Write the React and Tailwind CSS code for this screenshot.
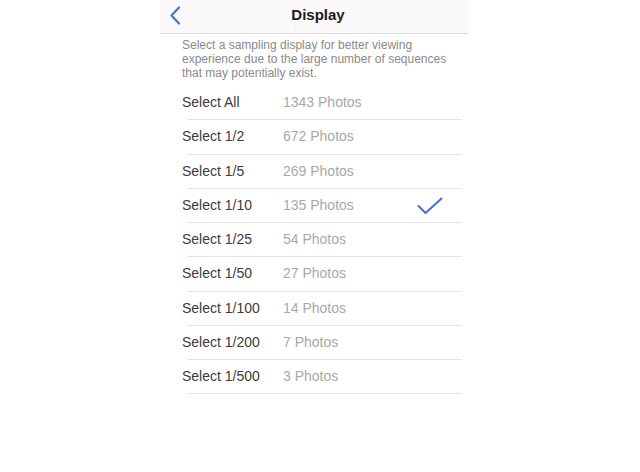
import React from "react";

const rows = [
  { label: "Select All", count: "1343 Photos" },
  { label: "Select 1/2", count: "672 Photos" },
  { label: "Select 1/5", count: "269 Photos" },
  { label: "Select 1/10", count: "135 Photos", checked: true },
  { label: "Select 1/25", count: "54 Photos" },
  { label: "Select 1/50", count: "27 Photos" },
  { label: "Select 1/100", count: "14 Photos" },
  { label: "Select 1/200", count: "7 Photos" },
  { label: "Select 1/500", count: "3 Photos" },
];

export default function App() {
  return (
    <div
      className="w-[640px] h-[472px] bg-white overflow-hidden"
      style={{ fontFamily: '"Liberation Sans", Arial, sans-serif' }}
    >
      <div className="ml-[160px] w-[308px]">
        {/* nav bar */}
        <div className="relative h-[34px] bg-[#fbf9fb] border-b border-[#dcdadc] flex items-center justify-center">
          <svg
            className="absolute left-[9px] top-[6px]"
            width="12"
            height="19"
            viewBox="0 0 12 19"
          >
            <path
              d="M10 1.5 L2.5 9.5 L10 17.5"
              fill="none"
              stroke="#3b7ad0"
              strokeWidth="2.2"
              strokeLinecap="round"
              strokeLinejoin="round"
            />
          </svg>
          <span className="text-[15px] font-bold text-[#1c1c1c] ml-[8px] mb-[2px]">
            Display
          </span>
        </div>

        {/* description */}
        <p className="pl-[22px] pr-[20px] pt-[4px] pb-[6px] text-[12px] leading-[14px] text-[#8a8a8a]">
          Select a sampling display for better viewing experience due to the
          large number of sequences that may potentially exist.
        </p>

        {/* options */}
        <div className="flex flex-col">
          {rows.map((row) => (
            <div key={row.label} className="flex flex-col">
              <div className="h-[33.25px] flex items-center pl-[22px] text-[14px]">
                <span className="w-[101px] text-[#3c3c3c]">{row.label}</span>
                <span className="text-[#a8a8a8]">{row.count}</span>
                {row.checked && (
                  <svg
                    className="ml-auto mr-[25px] mt-[1px]"
                    width="26"
                    height="18"
                    viewBox="0 0 26 18"
                  >
                    <path
                      d="M1.5 9 L8.5 16 L24.5 1.5"
                      fill="none"
                      stroke="#3b74c4"
                      strokeWidth="2"
                      strokeLinecap="round"
                      strokeLinejoin="round"
                    />
                  </svg>
                )}
              </div>
              <div className="ml-[27px] w-[275px] h-px bg-[#e5e5e5]" />
            </div>
          ))}
        </div>
      </div>
    </div>
  );
}
